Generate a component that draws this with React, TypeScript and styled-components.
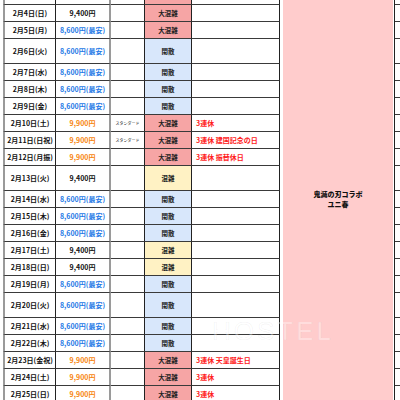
import {createGlobalStyle} from 'styled-components';
import styled from 'styled-components';

const GlobalStyle = createGlobalStyle`
  html, body {
    margin: 0;
    padding: 0;
    background: #ffffff;
    overflow: hidden;
  }
  body {
    font-family: "Noto Sans CJK JP", "Noto Sans", sans-serif;
  }
`;

type Status = 'busy' | 'crowded' | 'quiet';
type PriceKind = 'normal' | 'cheap' | 'high';

type Row = {
  date: string;
  price: string;
  kind: PriceKind;
  status: Status;
  plan?: string;
  note?: string;
  tall?: boolean;
};

const rows: Row[] = [
  {date: '2月4日(日)', price: '9,400円', kind: 'normal', status: 'busy'},
  {date: '2月5日(月)', price: '8,600円(最安)', kind: 'cheap', status: 'busy'},
  {date: '2月6日(火)', price: '8,600円(最安)', kind: 'cheap', status: 'quiet', tall: true},
  {date: '2月7日(水)', price: '8,600円(最安)', kind: 'cheap', status: 'quiet'},
  {date: '2月8日(木)', price: '8,600円(最安)', kind: 'cheap', status: 'quiet'},
  {date: '2月9日(金)', price: '8,600円(最安)', kind: 'cheap', status: 'quiet'},
  {date: '2月10日(土)', price: '9,900円', kind: 'high', status: 'busy', plan: 'スタンダード', note: '3連休'},
  {date: '2月11日(日祝)', price: '9,900円', kind: 'high', status: 'busy', plan: 'スタンダード', note: '3連休 建国記念の日'},
  {date: '2月12日(月振)', price: '9,900円', kind: 'high', status: 'busy', note: '3連休 振替休日'},
  {date: '2月13日(火)', price: '9,400円', kind: 'normal', status: 'crowded', tall: true},
  {date: '2月14日(水)', price: '8,600円(最安)', kind: 'cheap', status: 'quiet'},
  {date: '2月15日(木)', price: '8,600円(最安)', kind: 'cheap', status: 'quiet'},
  {date: '2月16日(金)', price: '8,600円(最安)', kind: 'cheap', status: 'quiet'},
  {date: '2月17日(土)', price: '9,400円', kind: 'normal', status: 'crowded'},
  {date: '2月18日(日)', price: '9,400円', kind: 'normal', status: 'crowded'},
  {date: '2月19日(月)', price: '8,600円(最安)', kind: 'cheap', status: 'quiet'},
  {date: '2月20日(火)', price: '8,600円(最安)', kind: 'cheap', status: 'quiet', tall: true},
  {date: '2月21日(水)', price: '8,600円(最安)', kind: 'cheap', status: 'quiet'},
  {date: '2月22日(木)', price: '8,600円(最安)', kind: 'cheap', status: 'quiet'},
  {date: '2月23日(金祝)', price: '9,900円', kind: 'high', status: 'busy', note: '3連休 天皇誕生日'},
  {date: '2月24日(土)', price: '9,900円', kind: 'high', status: 'busy', note: '3連休'},
  {date: '2月25日(日)', price: '9,900円', kind: 'high', status: 'busy', note: '3連休'},
];

const statusLabel: Record<Status, string> = {
  busy: '大混雑',
  crowded: '混雑',
  quiet: '閑散',
};

const statusBg: Record<Status, string> = {
  busy: '#f6a5a5',
  crowded: '#fff2c4',
  quiet: '#d8e7fb',
};

const priceColor: Record<PriceKind, string> = {
  normal: '#111111',
  cheap: '#2579e6',
  high: '#f7850f',
};

const Page = styled.div`
  position: relative;
  width: 400px;
  height: 400px;
  overflow: hidden;
`;

const Sheet = styled.div<{$rows: string}>`
  display: grid;
  margin-left: 3px;
  grid-template-columns: 53px 55px 34px 47px 88px 115px 8px;
  grid-template-rows: ${p => p.$rows};
`;

const Cell = styled.div<{$bg?: string; $right?: string; $align?: string}>`
  box-sizing: border-box;
  display: flex;
  align-items: center;
  justify-content: ${p => p.$align ?? 'center'};
  background: ${p => p.$bg ?? '#ffffff'};
  border-bottom: 1px solid #3a3a3a;
  border-right: ${p => p.$right ?? '1px solid #222'};
  font-size: 7px;
  font-weight: 700;
  line-height: 1;
  white-space: nowrap;
  overflow: hidden;
`;

const DateCell = styled(Cell)`
  border-left: 2px solid #9a9a9a;
  color: #111;
`;

const PriceText = styled.span<{$kind: PriceKind}>`
  color: ${p => priceColor[p.$kind]};
`;

const PlanText = styled.span`
  font-size: 4px;
  font-weight: 400;
  color: #111;
`;

const StatusText = styled.span`
  color: #222;
  font-size: 6.5px;
`;

const NoteCell = styled(Cell)`
  padding-left: 4px;
  color: #ff1a1a;
`;

const EdgeCell = styled.div`
  box-sizing: border-box;
  border-bottom: 1px solid #3a3a3a;
`;

const MergedCell = styled.div`
  grid-column: 6;
  grid-row: 1 / -1;
  box-sizing: border-box;
  border-right: 1px solid #222;
  padding: 0 1px 0 3px;
  display: flex;
`;

const MergedFill = styled.div`
  flex: 1;
  background: #ffcccc;
  display: flex;
  flex-direction: column;
  align-items: center;
  justify-content: center;
  gap: 3px;
  padding-bottom: 4px;
  font-size: 7px;
  font-weight: 900;
  color: #111;
  line-height: 1;
`;

const Watermark = styled.div`
  position: absolute;
  left: 212px;
  top: 316px;
  font-family: "Liberation Sans", sans-serif;
  font-size: 26px;
  font-weight: 400;
  letter-spacing: 3px;
  color: rgba(255, 255, 255, 0.35);
  -webkit-text-stroke: 0.6px rgba(120, 120, 120, 0.1);
  pointer-events: none;
`;

function DataRow({row}: {row: Row}) {
  return (
    <>
      <DateCell>{row.date}</DateCell>
      <Cell $right="2px solid #9a9a9a">
        <PriceText $kind={row.kind}>{row.price}</PriceText>
      </Cell>
      <Cell>{row.plan && <PlanText>{row.plan}</PlanText>}</Cell>
      <Cell $bg={statusBg[row.status]}>
        <StatusText>{statusLabel[row.status]}</StatusText>
      </Cell>
      <NoteCell $align="flex-start">{row.note}</NoteCell>
      <EdgeCell style={{gridColumn: 7}} />
    </>
  );
}

export default function App() {
  const heights = ['5px', ...rows.map(r => (r.tall ? '25px' : '17px'))].join(' ');

  return (
    <Page>
      <GlobalStyle />
      <Sheet $rows={heights}>
        <DateCell />
        <Cell $right="2px solid #9a9a9a" />
        <Cell />
        <Cell $bg={statusBg.busy} />
        <Cell />
        <EdgeCell style={{gridColumn: 7}} />
        {rows.map(r => (
          <DataRow key={r.date} row={r} />
        ))}
        <MergedCell>
          <MergedFill>
            <span>鬼滅の刃コラボ</span>
            <span>ユニ春</span>
          </MergedFill>
        </MergedCell>
      </Sheet>
      <Watermark>HOSTEL</Watermark>
    </Page>
  );
}
